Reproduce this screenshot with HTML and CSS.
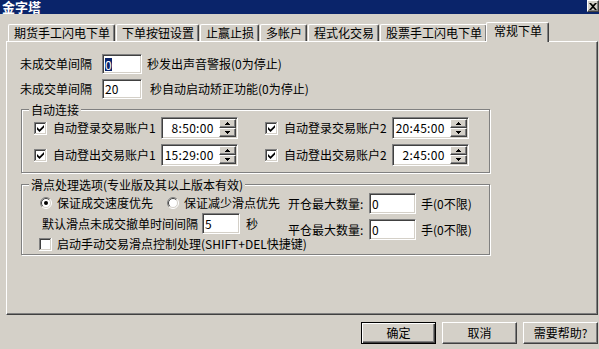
FILE: index.html
```html
<!DOCTYPE html>
<html lang="zh-CN">
<head>
<meta charset="utf-8">
<title>金字塔</title>
<link rel="stylesheet" href="styles.css">
</head>
<body>
<div class="titlebar">
  <span class="title">金字塔</span>
  <span class="close-btn" aria-label="关闭">
    <svg width="8" height="7" viewBox="0 0 8 7"><path d="M0 0h2l2 2 2-2h2L5 3.5 8 7H6L4 5 2 7H0l3-3.5z" fill="#000"/></svg>
  </span>
</div>
<div class="tabs">
  <div class="tab">期货手工闪电下单</div>
  <div class="tab">下单按钮设置</div>
  <div class="tab">止赢止损</div>
  <div class="tab">多帐户</div>
  <div class="tab">程式化交易</div>
  <div class="tab">股票手工闪电下单</div>
  <div class="tab active">常规下单</div>
</div>
<div class="panel">
  <div class="row">
    <span class="lbl">未成交单间隔</span>
    <span class="edit w40"><span class="sel">0</span></span>
    <span class="note1">秒发出声音警报(0为停止)</span>
  </div>
  <div class="row">
    <span class="lbl">未成交单间隔</span>
    <span class="edit w40">20</span>
    <span class="note2">秒自动启动矫正功能(0为停止)</span>
  </div>

  <div class="group g1">
    <div class="group-title">自动连接</div>
    <div class="auto-grid">
      <div class="auto-item">
        <svg class="check" width="13" height="13" viewBox="0 0 13 13"><rect width="13" height="13" fill="#fff"/><path d="M0 .5h12M.5 0v12" stroke="#808080"/><path d="M1 1.5h10M1.5 1v10" stroke="#404040"/><path d="M0 12.5h13M12.5 0v13" stroke="#fff"/><path d="M1 11.5h11M11.5 1v11" stroke="#d4d0c8"/><path d="M3 5v2.5l2.5 2.5 4.5-4.5V3L5.5 7.5z" fill="#000"/></svg>
        <span class="cb-text">自动登录交易账户1</span>
        <div class="spin"><span class="spin-value">8:50:00</span><span class="spin-btns"><span class="spin-btn"><svg width="5" height="3" viewBox="0 0 5 3"><path d="M2 0h1v1h1v1h1v1H0V2h1V1h1z"/></svg></span><span class="spin-btn"><svg width="5" height="3" viewBox="0 0 5 3"><path d="M0 0h5v1H4v1H3v1H2V2H1V1H0z"/></svg></span></span></div>
      </div>
      <div class="auto-item">
        <svg class="check" width="13" height="13" viewBox="0 0 13 13"><rect width="13" height="13" fill="#fff"/><path d="M0 .5h12M.5 0v12" stroke="#808080"/><path d="M1 1.5h10M1.5 1v10" stroke="#404040"/><path d="M0 12.5h13M12.5 0v13" stroke="#fff"/><path d="M1 11.5h11M11.5 1v11" stroke="#d4d0c8"/><path d="M3 5v2.5l2.5 2.5 4.5-4.5V3L5.5 7.5z" fill="#000"/></svg>
        <span class="cb-text">自动登录交易账户2</span>
        <div class="spin"><span class="spin-value">20:45:00</span><span class="spin-btns"><span class="spin-btn"><svg width="5" height="3" viewBox="0 0 5 3"><path d="M2 0h1v1h1v1h1v1H0V2h1V1h1z"/></svg></span><span class="spin-btn"><svg width="5" height="3" viewBox="0 0 5 3"><path d="M0 0h5v1H4v1H3v1H2V2H1V1H0z"/></svg></span></span></div>
      </div>
      <div class="auto-item">
        <svg class="check" width="13" height="13" viewBox="0 0 13 13"><rect width="13" height="13" fill="#fff"/><path d="M0 .5h12M.5 0v12" stroke="#808080"/><path d="M1 1.5h10M1.5 1v10" stroke="#404040"/><path d="M0 12.5h13M12.5 0v13" stroke="#fff"/><path d="M1 11.5h11M11.5 1v11" stroke="#d4d0c8"/><path d="M3 5v2.5l2.5 2.5 4.5-4.5V3L5.5 7.5z" fill="#000"/></svg>
        <span class="cb-text">自动登出交易账户1</span>
        <div class="spin"><span class="spin-value">15:29:00</span><span class="spin-btns"><span class="spin-btn"><svg width="5" height="3" viewBox="0 0 5 3"><path d="M2 0h1v1h1v1h1v1H0V2h1V1h1z"/></svg></span><span class="spin-btn"><svg width="5" height="3" viewBox="0 0 5 3"><path d="M0 0h5v1H4v1H3v1H2V2H1V1H0z"/></svg></span></span></div>
      </div>
      <div class="auto-item">
        <svg class="check" width="13" height="13" viewBox="0 0 13 13"><rect width="13" height="13" fill="#fff"/><path d="M0 .5h12M.5 0v12" stroke="#808080"/><path d="M1 1.5h10M1.5 1v10" stroke="#404040"/><path d="M0 12.5h13M12.5 0v13" stroke="#fff"/><path d="M1 11.5h11M11.5 1v11" stroke="#d4d0c8"/><path d="M3 5v2.5l2.5 2.5 4.5-4.5V3L5.5 7.5z" fill="#000"/></svg>
        <span class="cb-text">自动登出交易账户2</span>
        <div class="spin"><span class="spin-value">2:45:00</span><span class="spin-btns"><span class="spin-btn"><svg width="5" height="3" viewBox="0 0 5 3"><path d="M2 0h1v1h1v1h1v1H0V2h1V1h1z"/></svg></span><span class="spin-btn"><svg width="5" height="3" viewBox="0 0 5 3"><path d="M0 0h5v1H4v1H3v1H2V2H1V1H0z"/></svg></span></span></div>
      </div>
    </div>
  </div>

  <div class="group g2">
    <div class="group-title">滑点处理选项(专业版及其以上版本有效)</div>
    <div class="slip">
      <div class="slip-left">
        <div class="slip-row1">
          <svg class="radio" width="12" height="12" viewBox="0 0 12 12"><circle cx="6" cy="6" r="5" fill="#fff"/><path d="M2.1 9.9A5.5 5.5 0 0 1 9.9 2.1" fill="none" stroke="#808080"/><path d="M2.8 9.2A4.5 4.5 0 0 1 9.2 2.8" fill="none" stroke="#404040"/><path d="M9.9 2.1A5.5 5.5 0 0 1 2.1 9.9" fill="none" stroke="#fff"/><path d="M9.2 2.8A4.5 4.5 0 0 1 2.8 9.2" fill="none" stroke="#d4d0c8"/><circle cx="6" cy="6" r="2" fill="#000"/></svg>
          <span class="rtext">保证成交速度优先</span>
          <svg class="radio" width="12" height="12" viewBox="0 0 12 12"><circle cx="6" cy="6" r="5" fill="#fff"/><path d="M2.1 9.9A5.5 5.5 0 0 1 9.9 2.1" fill="none" stroke="#808080"/><path d="M2.8 9.2A4.5 4.5 0 0 1 9.2 2.8" fill="none" stroke="#404040"/><path d="M9.9 2.1A5.5 5.5 0 0 1 2.1 9.9" fill="none" stroke="#fff"/><path d="M9.2 2.8A4.5 4.5 0 0 1 2.8 9.2" fill="none" stroke="#d4d0c8"/></svg>
          <span class="rtext">保证减少滑点优先</span>
        </div>
        <div class="slip-row2">
          <span>默认滑点未成交撤单时间间隔</span>
          <span class="edit w38">5</span>
          <span class="sec">秒</span>
        </div>
        <div class="slip-row3">
          <svg class="check" width="13" height="13" viewBox="0 0 13 13"><rect width="13" height="13" fill="#fff"/><path d="M0 .5h12M.5 0v12" stroke="#808080"/><path d="M1 1.5h10M1.5 1v10" stroke="#404040"/><path d="M0 12.5h13M12.5 0v13" stroke="#fff"/><path d="M1 11.5h11M11.5 1v11" stroke="#d4d0c8"/></svg>
          <span class="rtext">启动手动交易滑点控制处理(SHIFT+DEL快捷键)</span>
        </div>
      </div>
      <div class="slip-right">
        <div class="qty-row">
          <span class="qty-lbl">开仓最大数量:</span>
          <span class="edit w47">0</span>
          <span class="qty-note">手(0不限)</span>
        </div>
        <div class="qty-row">
          <span class="qty-lbl">平仓最大数量:</span>
          <span class="edit w47">0</span>
          <span class="qty-note">手(0不限)</span>
        </div>
      </div>
    </div>
  </div>
</div>
<div class="buttons">
  <button class="btn default">确定</button>
  <button class="btn">取消</button>
  <button class="btn">需要帮助?</button>
</div>
</body>
</html>
```

FILE: styles.css
```css
* { box-sizing: border-box; }
html, body { margin: 0; padding: 0; }
body {
  width: 599px;
  height: 349px;
  overflow: hidden;
  background: #d4d0c8;
  font-family: "Noto Sans CJK SC", "Liberation Sans", sans-serif;
  font-size: 12px;
  line-height: 14px;
  color: #000;
}

/* title bar */
.titlebar {
  height: 14px;
  background: #0a246a;
  display: flex;
  justify-content: space-between;
  align-items: flex-start;
}
.title {
  color: #fff;
  font-weight: bold;
  font-size: 13px;
  line-height: 14px;
  height: 14px;
  padding-left: 2px;
}
.close-btn {
  width: 12px;
  height: 12px;
  background: #d4d0c8;
  border: 1px solid;
  border-color: #fff #404040 #404040 #fff;
  box-shadow: inset -1px -1px 0 #808080;
  display: flex;
  align-items: center;
  justify-content: center;
}

/* tabs */
.tabs {
  display: flex;
  align-items: flex-end;
  gap: 1px;
  height: 19px;
  margin: 8px 0 0 8px;
}
.tab {
  height: 17px;
  padding: 0 4px 0 5px;
  border-top: 1px solid #fff;
  border-left: 1px solid #fff;
  border-right: 1px solid #404040;
  box-shadow: inset -1px 0 0 #808080;
  border-radius: 2px 2px 0 0;
  line-height: 15px;
  white-space: nowrap;
  background: #d4d0c8;
}
.tab.active {
  height: 20px;
  padding: 0 6px 0 7px;
  margin: 0 -2px -1px -2px;
  position: relative;
  z-index: 1;
}

/* panel */
.panel {
  width: 592px;
  height: 274px;
  margin-left: 6px;
  border: 1px solid;
  border-color: #fff #404040 #404040 #fff;
  box-shadow: inset -1px -1px 0 #808080;
  padding: 12px 0 0 13px;
}
.row {
  display: flex;
  align-items: center;
  height: 20px;
  white-space: nowrap;
}
.row + .row { margin-top: 5px; }
.lbl { margin-right: 10px; }
.note1 { margin-left: 5px; }
.note2 { margin-left: 8px; }

.edit {
  display: flex;
  align-items: center;
  height: 100%;
  background: #fff;
  border: 1px solid;
  border-color: #808080 #fff #fff #808080;
  box-shadow: inset 1px 1px 0 #404040, inset -1px -1px 0 #d4d0c8;
  padding-left: 2px;
}
.w38 { width: 38px; }
.w40 { width: 40px; }
.w47 { width: 47px; }
.sel {
  background: #0a246a;
  color: #fff;
  line-height: 13px;
}

/* group boxes */
.group {
  width: 469px;
  margin-left: 1px;
  border: 1px solid #808080;
  box-shadow: inset 1px 1px 0 #fff, 1px 1px 0 #fff;
}
.group-title {
  width: fit-content;
  margin: -8px 0 0 7px;
  padding: 0 2px;
  background: #d4d0c8;
  line-height: 15px;
  white-space: nowrap;
}
.g1 { margin-top: 10px; padding-bottom: 6px; }
.g2 { margin-top: 11px; }

.auto-grid {
  display: grid;
  grid-template-columns: 231px auto;
  row-gap: 5px;
  padding-left: 12px;
}
.auto-item {
  display: flex;
  align-items: center;
  height: 22px;
  white-space: nowrap;
}
.check, .radio { display: block; flex-shrink: 0; }
.cb-text { margin-left: 6px; margin-right: 5px; }

.spin {
  display: flex;
  width: 77px;
  height: 22px;
  background: #fff;
  border: 1px solid;
  border-color: #808080 #fff #fff #808080;
  box-shadow: inset 1px 1px 0 #404040, inset -1px -1px 0 #d4d0c8;
  padding: 1px;
}
.spin-value {
  flex: 1;
  text-align: right;
  padding-right: 5px;
  line-height: 18px;
  letter-spacing: 0.3px;
}
.spin-btns {
  width: 17px;
  display: flex;
  flex-direction: column;
}
.spin-btn {
  flex: 1;
  display: flex;
  align-items: center;
  justify-content: center;
  background: #d4d0c8;
  border: 1px solid;
  border-color: #fff #404040 #404040 #fff;
  box-shadow: inset -1px -1px 0 #808080;
}

/* slippage group */
.slip { display: flex; }
.slip-left { width: 266px; flex-shrink: 0; }
.slip-row1, .slip-row2, .slip-row3 {
  display: flex;
  align-items: center;
  white-space: nowrap;
}
.slip-row1 { height: 21px; padding-left: 18px; }
.slip-row2 { height: 21px; padding-left: 20px; }
.slip-row3 { height: 20px; padding-left: 17px; }
.rtext { margin-left: 5px; }
.rtext + .radio { margin-left: 14px; }
.slip-row2 .edit { margin-left: 4px; }
.sec { margin-left: 6px; }

.slip-right { padding-top: 1px; }
.qty-row {
  display: flex;
  align-items: center;
  height: 21px;
  white-space: nowrap;
}
.qty-row + .qty-row { margin-top: 5px; }
.qty-lbl { width: 81px; }
.qty-note { margin-left: 5px; }

/* dialog buttons */
.buttons {
  display: flex;
  justify-content: flex-end;
  gap: 6px;
  margin-top: 7px;
  padding-right: 1px;
}
.btn {
  width: 75px;
  height: 22px;
  padding: 0;
  margin: 0;
  font: inherit;
  color: #000;
  background: #d4d0c8;
  border: 1px solid;
  border-color: #fff #404040 #404040 #fff;
  box-shadow: inset -1px -1px 0 #808080;
  border-radius: 0;
  line-height: 18px;
}
.btn.default {
  border-color: #000;
  box-shadow: inset 1px 1px 0 #fff, inset -1px -1px 0 #404040, inset -2px -2px 0 #808080;
}
```
